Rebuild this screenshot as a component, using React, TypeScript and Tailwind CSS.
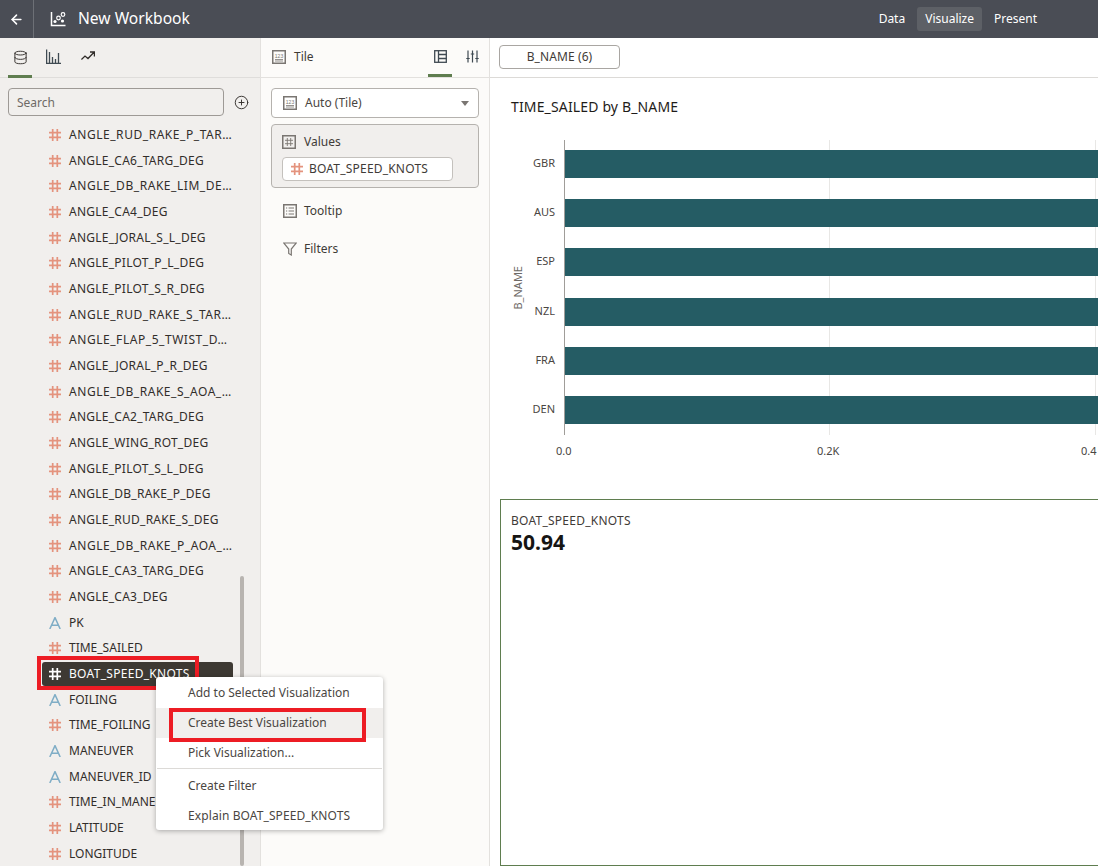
import React from "react";
import { Database, ArrowLeft, CirclePlus } from "lucide-react";

const F = "[font-family:'Noto_Sans','Open_Sans',sans-serif]";

function Hash({ className = "text-[#e4937e]" }: { className?: string }) {
  return (
    <svg width="12" height="12" viewBox="0 0 12 12" className={`${className} shrink-0`} fill="none" stroke="currentColor" strokeWidth="1.7">
      <path d="M3.7 0V12M8.3 0V12M0 3.7H12M0 8.3H12" />
    </svg>
  );
}
function AttrA() {
  return (
    <svg width="12" height="12" viewBox="0 0 12 12" className="text-[#7fadc6] shrink-0" fill="none" stroke="currentColor" strokeWidth="1.5">
      <path d="M0.8 12L6 0.6L11.2 12M2.7 8.3H9.3" />
    </svg>
  );
}

const cols: [string, "n" | "a"][] = [
  ["ANGLE_RUD_RAKE_P_TAR…", "n"], ["ANGLE_CA6_TARG_DEG", "n"], ["ANGLE_DB_RAKE_LIM_DE…", "n"],
  ["ANGLE_CA4_DEG", "n"], ["ANGLE_JORAL_S_L_DEG", "n"], ["ANGLE_PILOT_P_L_DEG", "n"],
  ["ANGLE_PILOT_S_R_DEG", "n"], ["ANGLE_RUD_RAKE_S_TAR…", "n"], ["ANGLE_FLAP_5_TWIST_D…", "n"],
  ["ANGLE_JORAL_P_R_DEG", "n"], ["ANGLE_DB_RAKE_S_AOA_…", "n"], ["ANGLE_CA2_TARG_DEG", "n"],
  ["ANGLE_WING_ROT_DEG", "n"], ["ANGLE_PILOT_S_L_DEG", "n"], ["ANGLE_DB_RAKE_P_DEG", "n"],
  ["ANGLE_RUD_RAKE_S_DEG", "n"], ["ANGLE_DB_RAKE_P_AOA_…", "n"], ["ANGLE_CA3_TARG_DEG", "n"],
  ["ANGLE_CA3_DEG", "n"], ["PK", "a"], ["TIME_SAILED", "n"],
];
const colsAfter: [string, "n" | "a"][] = [
  ["FOILING", "a"], ["TIME_FOILING", "n"], ["MANEUVER", "a"], ["MANEUVER_ID", "a"],
  ["TIME_IN_MANEUVER", "n"], ["LATITUDE", "n"], ["LONGITUDE", "n"],
];

function Row({ name, t }: { name: string; t: "n" | "a" }) {
  const track = name.endsWith("…")
    ? "tracking-[0.55px]"
    : name.startsWith("ANGLE")
      ? "tracking-[0.25px]"
      : "tracking-normal";
  return (
    <div className={`h-[25.68px] flex items-center pl-[49px] gap-[8px] text-[12px] ${track} text-[#312d2a] whitespace-nowrap`}>
      {t === "n" ? <Hash /> : <AttrA />}
      <span>{name}</span>
    </div>
  );
}

function TileIcon({ className = "" }: { className?: string }) {
  return (
    <svg width="14" height="14" viewBox="0 0 14 14" className={`shrink-0 ${className}`} fill="none">
      <rect x="0.75" y="0.75" width="12.5" height="12.5" stroke="#7a7672" strokeWidth="1.5" />
      <path d="M3 9.5H11M3 11H11" stroke="#7a7672" strokeWidth="0.8" />
      <text x="7" y="7.5" textAnchor="middle" fontSize="5" fill="#7a7672" fontFamily="Liberation Sans">123</text>
    </svg>
  );
}

const bars = ["GBR", "AUS", "ESP", "NZL", "FRA", "DEN"];

export default function App() {
  return (
    <div className={`relative w-[1098px] h-[866px] overflow-hidden flex flex-col bg-white ${F}`}>
      <header className="h-[38px] bg-[#4a4d55] flex items-center text-white shrink-0">
        <div className="w-[34px] h-full flex items-center justify-center border-r border-[#6d7076]">
          <ArrowLeft size={15} strokeWidth={2.5} />
        </div>
        <svg width="16" height="16" viewBox="0 0 16 16" className="ml-[16px]" fill="none" stroke="white">
          <path d="M1.5 1V14.5H15.5" strokeWidth="1.5" />
          <circle cx="5" cy="10.5" r="1.6" fill="white" stroke="none" />
          <circle cx="8.5" cy="7" r="1.8" strokeWidth="1.2" />
          <circle cx="13" cy="3.5" r="1.8" strokeWidth="1.2" />
          <circle cx="12.5" cy="10" r="1.6" fill="white" stroke="none" />
        </svg>
        <div className="ml-[12px] text-[15.6px]">New Workbook</div>
        <nav className="ml-auto mr-[53px] flex items-center gap-[4px] text-[12px]">
          <span className="px-[8px] h-[24px] flex items-center">Data</span>
          <span className="px-[8px] h-[24px] flex items-center rounded-[3px] bg-[#5d6066]">Visualize</span>
          <span className="px-[8px] h-[24px] flex items-center">Present</span>
        </nav>
      </header>

      <div className="flex-1 flex min-h-0">
        <aside className="w-[261px] shrink-0 bg-[#f1efed] border-r border-[#e3e1de] flex flex-col relative">
          <div className="h-[40px] shrink-0 border-b border-[#dfdddb] flex items-stretch pl-[8px] text-[#312d2a]">
            <div className="w-[24px] flex items-center justify-center border-b-[3px] border-[#5f7d4f] h-[40px] pt-[1px]">
              <Database size={15} strokeWidth={1.5} />
            </div>
            <div className="w-[43px] flex items-center justify-center pb-[3px]">
              <svg width="15" height="15" viewBox="0 0 15 15" fill="none" stroke="#3f4a52" strokeWidth="1.3">
                <path d="M0.6 0.5V14.4H15M3.5 3V14M6.5 8V14M9.5 10V14M12.5 4V14" />
              </svg>
            </div>
            <div className="w-[26px] flex items-center justify-center pb-[3px]">
              <svg width="14" height="10" viewBox="0 0 14 10" fill="none" stroke="#312d2a" strokeWidth="1.3">
                <path d="M0.4 8.5L4 5L7 7.5L13 1.3M9 1H13.4V5.4" />
              </svg>
            </div>
          </div>
          <div className="flex items-center pl-[8px] pt-[10px] pb-[6px] shrink-0">
            <div className="w-[216px] h-[28px] rounded-[4px] border border-[#9e9a96] flex items-center pl-[8px] pt-[1px] text-[12px] text-[#6e6a66]">Search</div>
            <CirclePlus size={15} strokeWidth={1.5} className="ml-[10px] text-[#312d2a]" />
          </div>
          <div className="flex-1 min-h-0 overflow-hidden">
            {cols.map((c) => <Row key={c[0]} name={c[0]} t={c[1]} />)}
            <div className="h-[25.68px] flex items-center">
              <div className="ml-[42px] w-[191px] h-[24px] rounded-[3px] bg-[#3d3933] flex items-center pl-[7px] gap-[8px] text-[12px] tracking-[0.3px] text-white">
                <Hash className="text-white" />
                <span>BOAT_SPEED_KNOTS</span>
              </div>
            </div>
            {colsAfter.map((c) => <Row key={c[0]} name={c[0]} t={c[1]} />)}
          </div>
          <div className="absolute left-[240px] top-[538px] bottom-0 w-[4px] rounded-full bg-[#b8b4b0]" />
          <div className="absolute left-[37px] top-[618px] w-[162px] h-[34px] border-[4px] border-[#ed1c24]" />
        </aside>

        <section className="w-[229px] shrink-0 bg-[#fcfbf9] border-r border-[#e3e1de] flex flex-col text-[12px] text-[#3f3b37]">
          <div className="h-[40px] shrink-0 border-b border-[#e3e1de] flex items-stretch pl-[11px] pr-[5px]">
            <div className="flex items-center gap-[8px] pb-[1px]"><TileIcon /><span>Tile</span></div>
            <div className="ml-auto w-[24px] flex items-center justify-center border-b-[3px] border-[#5f7d4f]">
              <svg width="13" height="13" viewBox="0 0 13 13" fill="none" stroke="#3f4a52" strokeWidth="1.3"><rect x="0.7" y="0.7" width="11.6" height="11.6" /><path d="M4.5 0.7V12.3M4.5 4.5H12.3M4.5 8.5H12.3" /></svg>
            </div>
            <div className="w-[24px] ml-[8px] flex items-center justify-center pb-[3px]">
              <svg width="13" height="13" viewBox="0 0 13 13" fill="none" stroke="#3f4a52" strokeWidth="1.2"><path d="M2 0.5V12.5M6.5 0.5V12.5M11 0.5V12.5M0.3 8.5H3.7M4.8 4H8.2M9.3 8.5H12.7" /></svg>
            </div>
          </div>
          <div className="px-[10px] pt-[10px] flex flex-col">
            <div className="h-[30px] rounded-[4px] border border-[#b5b2ae] bg-white flex items-center pl-[11px] pr-[9px] gap-[8px] text-[#4a4642]">
              <TileIcon />
              <span>Auto (Tile)</span>
              <span className="ml-auto w-0 h-0 border-l-[4px] border-r-[4px] border-t-[5px] border-l-transparent border-r-transparent border-t-[#7a7672]" />
            </div>
            <div className="mt-[6px] h-[64px] rounded-[4px] border border-[#b5b2ae] bg-[#f1efed] pl-[10px] pt-[8px]">
              <div className="flex items-center gap-[8px]">
                <svg width="14" height="14" viewBox="0 0 14 14" fill="none"><rect x="0.75" y="0.75" width="12.5" height="12.5" stroke="#7a7672" strokeWidth="1.5" /><path d="M5.3 3V11M8.7 3V11M3 5.3H11M3 8.7H11" stroke="#7a7672" strokeWidth="0.9" /></svg>
                <span>Values</span>
              </div>
              <div className="mt-[6px] w-[171px] h-[24px] rounded-[4px] border border-[#c4c1bd] bg-white flex items-center pl-[8px] gap-[6px] tracking-[0.2px]">
                <Hash />
                <span>BOAT_SPEED_KNOTS</span>
              </div>
            </div>
            <div className="mt-[14px] pl-[12px] flex items-center gap-[7px]">
              <svg width="14" height="14" viewBox="0 0 14 14" fill="none"><rect x="0.75" y="0.75" width="12.5" height="12.5" stroke="#7a7672" strokeWidth="1.5" /><path d="M3 4H4.2M3 7H4.2M3 10H4.2M5.6 4H11M5.6 7H11M5.6 10H11" stroke="#7a7672" strokeWidth="1" /></svg>
              <span>Tooltip</span>
            </div>
            <div className="mt-[20px] pl-[12px] flex items-center gap-[7px]">
              <svg width="14" height="14" viewBox="0 0 14 14" fill="none" stroke="#7a7672" strokeWidth="1.2"><path d="M0.7 1H13.3L8.3 7V13L5.7 11.5V7Z" /></svg>
              <span>Filters</span>
            </div>
          </div>
        </section>

        <main className="flex-1 min-w-0 flex flex-col">
          <div className="h-[40px] shrink-0 border-b border-[#dcdad7] flex items-center pl-[9px] pb-[1px]">
            <div className="w-[121px] h-[24px] rounded-[4px] border border-[#a9a6a2] flex items-center justify-center text-[12px] tracking-[0.1px] text-[#3f3b37]">B_NAME (6)</div>
          </div>
          <div className="h-[421px] shrink-0 overflow-hidden pl-[21px] pt-[19px] relative">
            <div className="text-[14px] leading-[20px] tracking-[0.15px] text-[#1f1c19]">TIME_SAILED by B_NAME</div>
            <div className="absolute left-[339px] top-[62px] w-px h-[295px] bg-[#e8e7e5]" />
            <div className="absolute left-[605px] top-[62px] w-px h-[295px] bg-[#e8e7e5]" />
            <div className="absolute left-[20px] top-[62px] h-[295px] flex items-center">
              <span className="[writing-mode:vertical-rl] rotate-180 text-[11px] text-[#6e6a66]">B_NAME</span>
            </div>
            <div className="ml-[53px] mt-[23px] w-[calc(100%+100px)] h-[295px] border-l border-[#a09d99] flex flex-col justify-between pt-[10px] pb-[11px] relative">
              {bars.map((b) => (
                <div key={b} className="relative h-[28px] bg-[#255c64]">
                  <span className="absolute right-full mr-[10px] top-[5px] text-[11px] text-[#4a4642]">{b}</span>
                </div>
              ))}
            </div>
            <div className="relative h-[30px] text-[11px] text-[#4a4642]">
              <span className="absolute left-[45px] top-[8px]">0.0</span>
              <span className="absolute left-[306px] top-[8px]">0.2K</span>
              <span className="absolute left-[570px] top-[8px]">0.4</span>
            </div>
          </div>
          <div className="flex-1 ml-[10px] border border-[#5f7d4f] -mr-[4px] pl-[10px] pt-[13px]">
            <div className="text-[12px] leading-[16px] tracking-[0.25px] text-[#3f3b37]">BOAT_SPEED_KNOTS</div>
            <div className="text-[21px] leading-[26px] font-bold text-[#161513]">50.94</div>
          </div>
        </main>
      </div>

      <div className="absolute left-[156px] top-[677px] w-[227px] h-[153px] bg-white rounded-[3px] shadow-[0_1px_5px_rgba(0,0,0,0.3)] py-[1px] text-[12px] text-[#4a4642]">
        <div className="h-[30px] flex items-center pl-[32px]">Add to Selected Visualization</div>
        <div className="h-[30px] flex items-center pl-[32px] bg-[#f1efed]">Create Best Visualization</div>
        <div className="h-[30px] flex items-center pl-[32px]">Pick Visualization...</div>
        <div className="mx-[1px] mb-[2px] h-px bg-[#dcdad7]" />
        <div className="h-[30px] flex items-center pl-[32px]">Create Filter</div>
        <div className="h-[30px] flex items-center pl-[32px] tracking-[0.1px]">Explain BOAT_SPEED_KNOTS</div>
      </div>
      <div className="absolute left-[169px] top-[708px] w-[197px] h-[34px] border-[4px] border-[#ed1c24]" />
    </div>
  );
}
